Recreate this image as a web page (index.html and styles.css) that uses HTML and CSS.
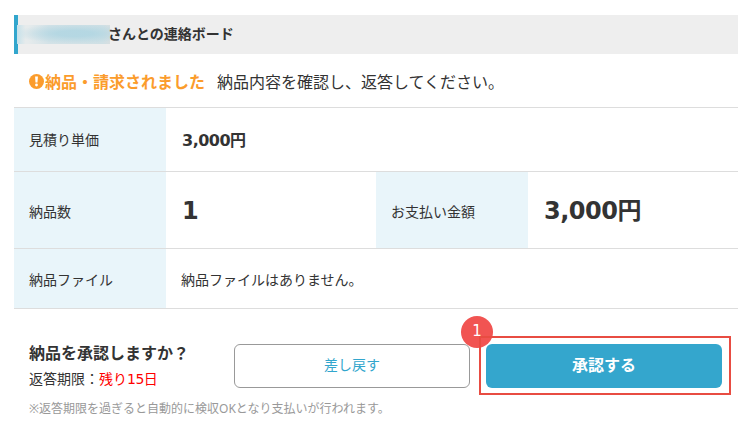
FILE: index.html
```html
<!DOCTYPE html>
<html lang="ja">
<head>
  <meta charset="UTF-8" />
  <meta name="viewport" content="width=device-width, initial-scale=1.0" />
  <title>連絡ボード</title>
  <link rel="stylesheet" href="styles.css">
</head>
<body>

  <h1 class="board-title"><span class="user-name"></span><span class="board-name">さんとの連絡ボード</span></h1>

  <div class="status">
    <svg class="status-icon" width="15" height="15" viewBox="0 0 15 15">
      <circle cx="7.5" cy="7.5" r="7.5" fill="#fb9c2c"/>
      <path d="M6.1 2.6h2.8l-.4 6H6.5z" fill="#fff"/>
      <circle cx="7.5" cy="11" r="1.4" fill="#fff"/>
    </svg>
    <strong>納品・請求されました</strong>
    <span class="status-text">納品内容を確認し、返答してください。</span>
  </div>

  <dl class="detail">
    <div class="row row-price">
      <dt>見積り単価</dt>
      <dd class="price"><span class="num">3,000</span><span class="yen">円</span></dd>
    </div>
    <div class="row row-total">
      <dt>納品数</dt>
      <dd class="large"><span class="num">1</span></dd>
      <dt>お支払い金額</dt>
      <dd class="large"><span class="num">3,000</span><span class="yen">円</span></dd>
    </div>
    <div class="row row-file">
      <dt>納品ファイル</dt>
      <dd>納品ファイルはありません。</dd>
    </div>
  </dl>

  <div class="approve">
    <div class="question">
      <h2>納品を承認しますか？</h2>
      <p>返答期限：<span class="limit">残り<span class="num">15</span>日</span></p>
    </div>
    <button class="btn btn-back">差し戻す</button>
    <div class="marked">
      <span class="badge">1</span>
      <button class="btn btn-ok">承認する</button>
      <span class="frame"></span>
    </div>
  </div>
  <p class="note">※返答期限を過ぎると自動的に検収OKとなり支払いが行われます。</p>

</body>
</html>
```

FILE: styles.css
```css
* {
  box-sizing: border-box;
}
body {
  margin: 0;
  padding: 15px 14px 0;
  font-family: "Noto Sans", "Noto Sans CJK JP", sans-serif;
  font-size: 14px;
  color: #333;
  background: #fff;
}
h1, h2, p, dl, dt, dd {
  margin: 0;
}
.num {
  font-family: "DejaVu Sans", sans-serif;
  letter-spacing: -.5px;
}

.board-title {
  display: flex;
  align-items: center;
  width: 724px;
  height: 39px;
  border-left: 4px solid #32a6cd;
  background: #eee;
  font-size: 14px;
  line-height: 20px;
}
.board-name {
  padding-bottom: 2px;
}
.user-name {
  width: 93px;
  height: 19px;
  margin-left: -1px;
  margin-right: -2px;
  margin-bottom: 1px;
  background:
    linear-gradient(90deg, #c5e1ea, transparent 9%),
    radial-gradient(ellipse 60px 10px at 62% 45%, rgba(174, 213, 226, .8) 30%, transparent),
    linear-gradient(90deg, #e6ebec 12%, #d3e2e7 34%, #cfe0e5 92%, #d8dfe1);
}

.status {
  display: flex;
  align-items: center;
  height: 53px;
  padding: 2px 0 0 15px;
  font-size: 16px;
  line-height: 24px;
}
.status-icon {
  margin-right: 1px;
}
.status strong {
  color: #fb9c2c;
}
.status-text {
  margin-left: 12px;
}

.detail {
  width: 724px;
  border-top: 1px solid #ddd;
}
.row {
  display: grid;
  grid-template-columns: 152px 210px 152px 210px;
  border-bottom: 1px solid #ddd;
}
.row-price {
  height: 64px;
}
.row-total {
  height: 77px;
}
.row-file {
  height: 60px;
}
.row dt,
.row dd {
  display: flex;
  align-items: center;
  padding: 0 15px;
  white-space: nowrap;
}
.row dt {
  background: #e9f5fa;
}
.row-price dt {
  padding-bottom: 1px;
}
.row-total dt {
  padding-top: 2px;
}
.row .price {
  padding-left: 16px;
  font-size: 16px;
  font-weight: bold;
}
.price .num {
  padding-top: 1px;
}
.price .yen {
  padding-bottom: 2px;
}
.row .large {
  padding-left: 16px;
  font-size: 24px;
  font-weight: bold;
}
.large .num {
  padding-top: 1px;
}
.large .yen {
  padding-bottom: 4px;
}

.approve {
  display: flex;
  align-items: flex-start;
  padding: 35px 0 0 15px;
}
.question {
  width: 205px;
}
.question h2 {
  margin-top: -4px;
  font-size: 16px;
  line-height: 26px;
}
.question p {
  line-height: 26px;
}
.limit {
  color: #f00;
}
.btn {
  display: block;
  width: 236px;
  height: 44px;
  padding: 0 0 4px;
  border-radius: 6px;
  font-family: inherit;
  cursor: pointer;
}
.btn-back {
  border: 1px solid #999;
  background: #fff;
  color: #32a6cd;
  font-size: 14px;
}
.btn-ok {
  border: none;
  background: #34a6cd;
  color: #fff;
  font-size: 16px;
  font-weight: bold;
}
.marked {
  position: relative;
  margin-left: 16px;
}
.badge {
  position: absolute;
  left: -25px;
  top: -28px;
  width: 32px;
  height: 32px;
  border-radius: 50%;
  background: #f15452;
  color: #fff;
  font-family: "DejaVu Sans", sans-serif;
  font-size: 15px;
  line-height: 31px;
  text-align: center;
}
.marked .btn {
  position: relative;
}
.frame {
  position: absolute;
  left: -7px;
  top: -8px;
  width: 252px;
  height: 59px;
  border: 2px solid #e84c42;
  pointer-events: none;
}
.note {
  padding: 8px 0 0 15px;
  color: #999;
  font-size: 12px;
  line-height: 18px;
}
```
